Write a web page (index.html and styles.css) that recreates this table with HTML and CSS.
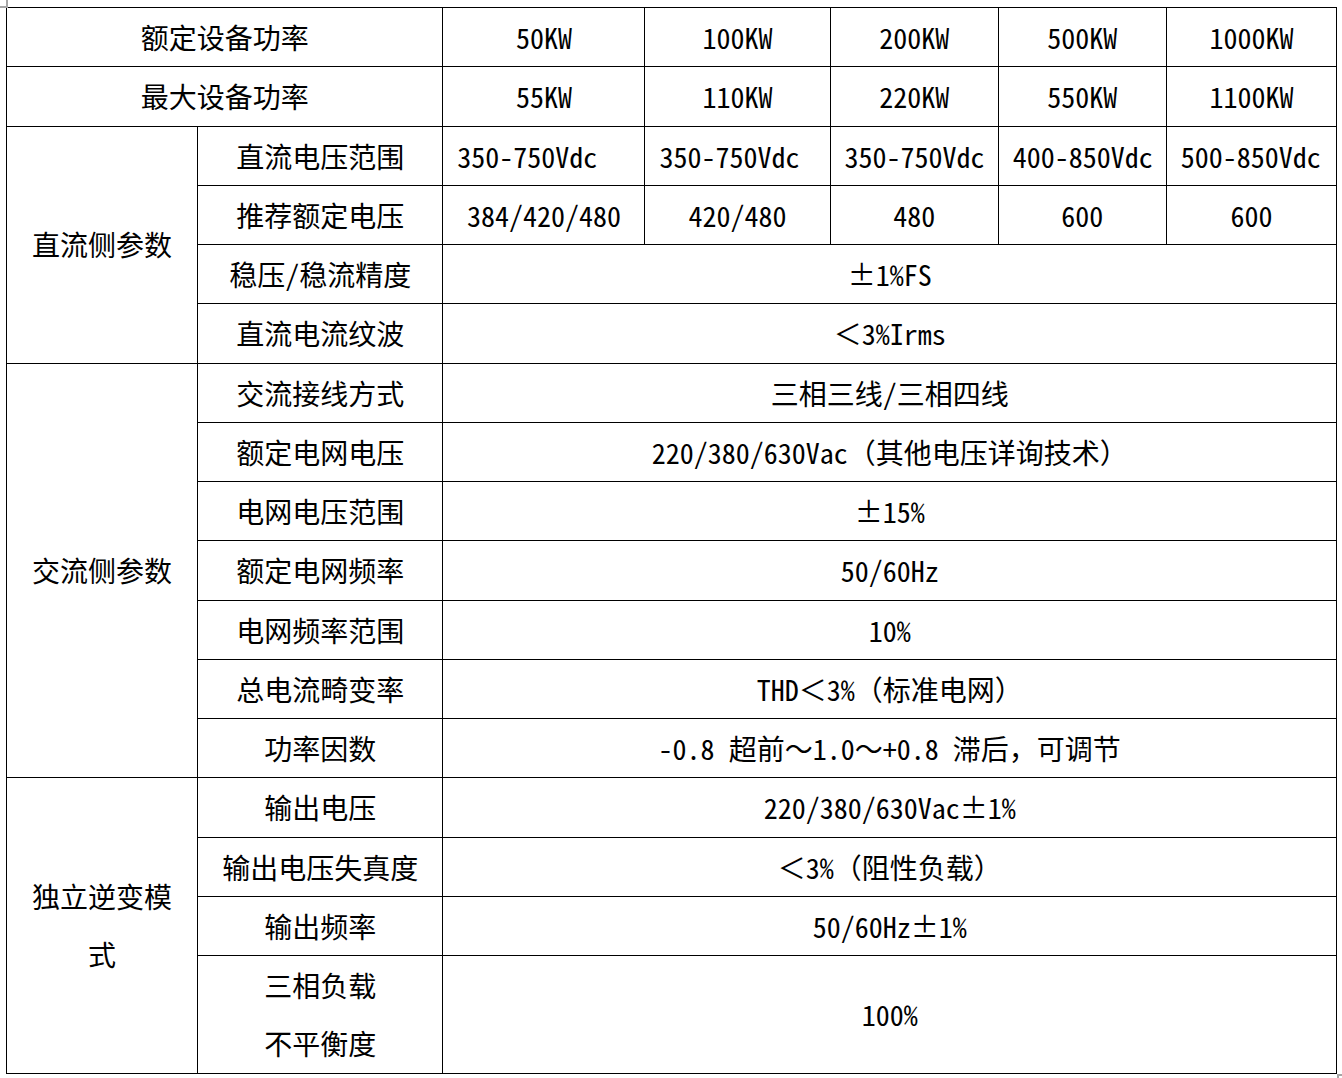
FILE: index.html
```html
<!DOCTYPE html>
<html lang="zh-CN">
<head>
<meta charset="utf-8">
<title>参数表</title>
<link rel="stylesheet" href="styles.css">
</head>
<body>
<span class="mark mark-tl"></span>
<table class="spec">
  <colgroup>
    <col class="c1"><col class="c2"><col class="c3"><col class="c4"><col class="c5"><col class="c6"><col class="c7">
  </colgroup>
  <tbody>
    <tr><td colspan="2">额定设备功率</td><td><span class="en">50KW</span></td><td><span class="en">100KW</span></td><td><span class="en">200KW</span></td><td><span class="en">500KW</span></td><td><span class="en">1000KW</span></td></tr>
    <tr><td colspan="2">最大设备功率</td><td><span class="en">55KW</span></td><td><span class="en">110KW</span></td><td><span class="en">220KW</span></td><td><span class="en">550KW</span></td><td><span class="en">1100KW</span></td></tr>
    <tr><td rowspan="4">直流侧参数</td><td>直流电压范围</td><td class="left"><span class="en">350-750Vdc</span></td><td class="left"><span class="en">350-750Vdc</span></td><td class="left"><span class="en">350-750Vdc</span></td><td class="left"><span class="en">400-850Vdc</span></td><td class="left"><span class="en">500-850Vdc</span></td></tr>
    <tr><td>推荐额定电压</td><td><span class="en">384/420/480</span></td><td><span class="en">420/480</span></td><td><span class="en">480</span></td><td><span class="en">600</span></td><td><span class="en">600</span></td></tr>
    <tr><td>稳压<span class="en">/</span>稳流精度</td><td colspan="5">±<span class="en">1%FS</span></td></tr>
    <tr><td>直流电流纹波</td><td colspan="5">＜<span class="en">3%Irms</span></td></tr>
    <tr><td rowspan="7">交流侧参数</td><td>交流接线方式</td><td colspan="5">三相三线<span class="en">/</span>三相四线</td></tr>
    <tr><td>额定电网电压</td><td colspan="5"><span class="en">220/380/630Vac</span>（其他电压详询技术）</td></tr>
    <tr><td>电网电压范围</td><td colspan="5">±<span class="en">15%</span></td></tr>
    <tr><td>额定电网频率</td><td colspan="5"><span class="en">50/60Hz</span></td></tr>
    <tr><td>电网频率范围</td><td colspan="5"><span class="en">10%</span></td></tr>
    <tr><td>总电流畸变率</td><td colspan="5"><span class="en">THD</span>＜<span class="en">3%</span>（标准电网）</td></tr>
    <tr><td>功率因数</td><td colspan="5"><span class="en">-0.8 </span>超前～<span class="en">1.0</span>～<span class="en">+0.8 </span>滞后，可调节</td></tr>
    <tr><td rowspan="5">独立逆变模式</td><td>输出电压</td><td colspan="5"><span class="en">220/380/630Vac</span>±<span class="en">1%</span></td></tr>
    <tr><td>输出电压失真度</td><td colspan="5">＜<span class="en">3%</span>（阻性负载）</td></tr>
    <tr><td>输出频率</td><td colspan="5"><span class="en">50/60Hz</span>±<span class="en">1%</span></td></tr>
    <tr class="tall"><td>三相负载<br>不平衡度</td><td colspan="5"><span class="en">100%</span></td></tr>
  </tbody>
</table>
<span class="mark mark-br"></span>
</body>
</html>
```

FILE: styles.css
```css
html, body {
  margin: 0;
  padding: 0;
  background: #ffffff;
}

body {
  position: relative;
  width: 1342px;
  height: 1078px;
  overflow: hidden;
  font-family: "Noto Sans CJK SC", "Noto Sans", sans-serif;
  font-size: 28px;
  color: #000000;
}

.spec {
  margin: 7px 0 0 6px;
  width: 1331px;
  table-layout: fixed;
  border-collapse: collapse;
}

.c1 { width: 191px; }
.c2 { width: 245px; }
.c3 { width: 202px; }
.c4 { width: 185px; }
.c5 { width: 168px; }
.c6 { width: 168px; }
.c7 { width: 170px; }

.spec td {
  border: 1px solid #000000;
  padding: 0 12px;
  height: 58.25px;
  line-height: 58.25px;
  text-align: center;
  vertical-align: middle;
  white-space: normal;
  word-break: break-all;
}

.spec td.left {
  text-align: left;
  padding-left: 14px;
  padding-right: 4px;
  white-space: nowrap;
}

.en {
  font-family: "Noto Sans CJK SC", sans-serif;
  font-feature-settings: "hwid" 1;
}

.mark {
  position: absolute;
  width: 6px;
  height: 6px;
  border-color: #a6a6a6;
  border-style: solid;
}

.mark-tl {
  left: 0;
  top: 0;
  border-width: 0 2px 2px 0;
}

.mark-br {
  left: 1337px;
  top: 1074px;
  border-width: 2px 0 0 2px;
}
```
